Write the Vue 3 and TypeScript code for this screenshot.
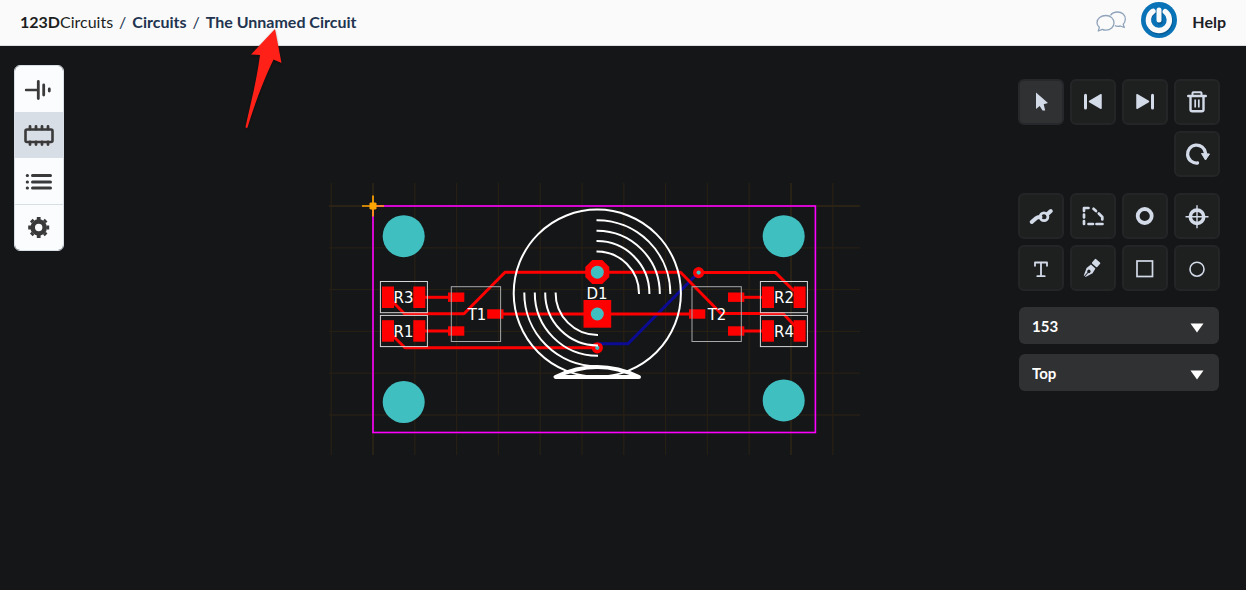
<script setup lang="ts">
import { ref } from 'vue'

interface Box { x: number; y: number; w: number; h: number }
interface Label { text: string; x: number; y: number }

const activeView = ref('pcb')
const activeTool = ref('select')
const traceWidth = ref('153')
const layer = ref('Top')

const views = [
  { id: 'schematic', label: 'Schematic view' },
  { id: 'pcb', label: 'PCB view' },
  { id: 'parts', label: 'Parts list' },
  { id: 'settings', label: 'Settings' },
]

const editTools = [
  { id: 'select', label: 'Select' },
  { id: 'first', label: 'Undo' },
  { id: 'last', label: 'Redo' },
  { id: 'delete', label: 'Delete' },
  { id: 'rotate', label: 'Rotate' },
]

const drawTools = [
  { id: 'trace', label: 'Trace' },
  { id: 'polygon', label: 'Polygon' },
  { id: 'via', label: 'Via' },
  { id: 'hole', label: 'Hole' },
  { id: 'text', label: 'Text' },
  { id: 'pen', label: 'Pen' },
  { id: 'rect', label: 'Rectangle' },
  { id: 'circle', label: 'Circle' },
]

const pitch = 41.8
const gridX = Array.from({ length: 13 }, (_, i) => 373 + (i - 1) * pitch)
const gridY = Array.from({ length: 6 }, (_, i) => 206 + i * pitch)

const holes = [[403.7, 236.2], [403.7, 402], [783.7, 236.2], [783.7, 400.4]]

const traces = [
  'M425 297.3H450', 'M425 331H450', 'M742 297.3H764', 'M742 331H764',
  'M393 302L404.5 313.8H464L505 272.2H680.5L721 313.5H783L795 326',
  'M393 336L405 347.8H597',
  'M503 314H690',
  'M698.5 272.6H775.5L794 291',
]

const pads: Box[] = [
  { x: 382, y: 286.5, w: 12, h: 21.5 }, { x: 413.3, y: 286.5, w: 12, h: 21.5 },
  { x: 382, y: 320.2, w: 12, h: 21.5 }, { x: 413.3, y: 320.2, w: 12, h: 21.5 },
  { x: 762, y: 286.5, w: 12, h: 21.5 }, { x: 793.6, y: 286.5, w: 12, h: 21.5 },
  { x: 762, y: 320.2, w: 12, h: 21.5 }, { x: 793.6, y: 320.2, w: 12, h: 21.5 },
  { x: 448, y: 292.5, w: 16.3, h: 9.4 }, { x: 448, y: 326.3, w: 16.3, h: 9.4 },
  { x: 487.2, y: 309.3, w: 16.3, h: 9.4 }, { x: 689, y: 309.3, w: 16.3, h: 9.4 },
  { x: 728, y: 292.5, w: 16.3, h: 9.4 }, { x: 728, y: 326.3, w: 16.3, h: 9.4 },
  { x: 583.5, y: 300, w: 27.7, h: 27.7 },
]

const outlines: Box[] = [
  { x: 380.4, y: 281.5, w: 47, h: 31.2 }, { x: 380.4, y: 315.4, w: 47, h: 31.2 },
  { x: 760.4, y: 281.5, w: 47, h: 31.2 }, { x: 760.4, y: 315.4, w: 47, h: 31.2 },
]
const packages: Box[] = [
  { x: 451.3, y: 286.7, w: 49.3, h: 54.8 }, { x: 692, y: 286.7, w: 49.3, h: 54.8 },
]

const labels: Label[] = [
  { text: 'R3', x: 403.5, y: 303 }, { text: 'R1', x: 403.5, y: 337 },
  { text: 'R2', x: 784, y: 303 }, { text: 'R4', x: 784, y: 337 },
  { text: 'T1', x: 477, y: 320 }, { text: 'T2', x: 717, y: 320 },
  { text: 'D1', x: 597, y: 299 },
]

const radii = [42, 52.4, 62.8, 73.3]
const upperArc = (r: number) => `M596.5 ${293.5 - r}A${r} ${r} 0 0 1 ${597 + r} 294`
const lowerArc = (r: number) => `M${597.6 - r} 292.5A${r} ${r} 0 0 0 598 ${293 + r}`
</script>

<template>
  <div class="app">
    <header class="topbar">
      <nav class="crumbs" aria-label="Breadcrumb">
        <a href="#" class="brand"><b>123D</b>Circuits</a>
        <span class="sep">/</span>
        <a href="#">Circuits</a>
        <span class="sep">/</span>
        <a href="#">The Unnamed Circuit</a>
      </nav>
      <div class="account">
        <button class="plain" aria-label="Messages">
          <svg width="30" height="24" viewBox="0 0 30 24" fill="none" stroke="#8fa3bb" stroke-width="1.3" stroke-linejoin="round">
            <path d="M14.500 5.300C16 3 18.700 2 21.500 2C26.200 2 29.300 5 29.300 9C29.300 11.200 28.700 13 27.200 14.300L28.300 17.500L24.300 16C22.700 16.400 20.500 16.300 18.800 15.700" />
            <path d="M10 5.500C14.500 5.500 18 8.700 18 12.800C18 17 14.500 20.200 10 20.200C8.700 20.200 7.400 20 6.300 19.400L2.300 21L3.300 17.300C1.800 16 1 14.500 1 12.800C1 8.700 5 5.500 10 5.500Z" />
          </svg>
        </button>
        <button class="plain profile" aria-label="Profile">
          <svg width="36" height="36" viewBox="0 0 36 36">
            <circle cx="18" cy="18" r="18" fill="#0a73b7" />
            <path d="M12.300 9.200A10.800 10.800 0 1 0 24.700 9.800M18.500 9V19" fill="none" stroke="#075a94" stroke-width="5" stroke-linecap="round" transform="translate(.5 1)" />
            <path d="M12 9.300A10.500 10.500 0 1 0 24.300 9.700" fill="none" stroke="#fafafa" stroke-width="5.400" stroke-linecap="round" />
            <path d="M18 8V18" stroke="#fafafa" stroke-width="5" stroke-linecap="round" />
          </svg>
        </button>
        <a href="#" class="help">Help</a>
      </div>
    </header>

    <main class="workspace">
      <svg class="board" role="img" aria-label="Circuit board layout">
        <g transform="translate(0 -46)">
          <g stroke="#261f14" stroke-width="1.300">
            <line v-for="x in gridX" :key="'x' + x" :x1="x" :x2="x" y1="183" y2="455" />
            <line v-for="y in gridY" :key="'y' + y" x1="329" x2="860" :y1="y" :y2="y" />
            <path d="M373 183V455M791 183V455M329 206H860" stroke="#2f2517" />
          </g>

          <path d="M597 343.800H628L698 273" class="bottom-copper" />
          <rect x="373" y="206" width="442.400" height="226.500" class="edge" />
          <circle v-for="(h, i) in holes" :key="i" :cx="h[0]" :cy="h[1]" r="21" class="drill" />

          <path v-for="t in traces" :key="t" :d="t" class="trace" />
          <rect v-for="(p, i) in pads" :key="'p' + i" :x="p.x" :y="p.y" :width="p.w" :height="p.h" class="copper" />
          <path d="M592.300 260H602.300L609.300 267V277L602.300 284H592.300L585.300 277V267Z" class="copper" />
          <circle cx="597.300" cy="347.800" r="5.600" class="copper" />
          <circle cx="698.600" cy="272.600" r="5.600" class="copper" />
          <circle cx="597.300" cy="272.200" r="6.500" class="drill" />
          <circle cx="597.300" cy="314" r="6.500" class="drill" />
          <circle cx="597.300" cy="347.800" r="2.100" class="drill" />
          <circle cx="698.600" cy="272.600" r="2.100" class="drill" />

          <g class="silk">
            <rect v-for="(o, i) in outlines" :key="'o' + i" :x="o.x" :y="o.y" :width="o.w" :height="o.h" stroke="#d6d6d6" stroke-width="1" class="thin" />
            <rect v-for="(o, i) in packages" :key="'k' + i" :x="o.x" :y="o.y" :width="o.w" :height="o.h" class="thin dim" />
            <circle cx="597.300" cy="293.200" r="83.600" />
            <path v-for="r in radii" :key="'u' + r" :d="upperArc(r)" />
            <path v-for="r in radii" :key="'l' + r" :d="lowerArc(r)" />
            <path d="M555.500 377H639Q597.300 357 555.500 377Z" class="base" />
          </g>
          <text v-for="l in labels" :key="l.text" :x="l.x" :y="l.y" class="ref">{{ l.text }}</text>

          <path d="M362 206H384M373 195.500V216.500" stroke="#ffa500" stroke-width="1.700" />
          <path d="M370.500 202.500H375.500L376.500 203.500V208.500L375.500 209.500H370.500L369.500 208.500V203.500Z" fill="#ffa500" />
        </g>
      </svg>

      <nav class="views" aria-label="Views">
        <button
          v-for="v in views" :key="v.id" :aria-label="v.label"
          :class="{ active: activeView === v.id }" @click="activeView = v.id"
        >
          <svg v-if="v.id === 'schematic'" width="30" height="24" viewBox="0 0 30 24" fill="none" stroke="#3a3a3a" stroke-linecap="round">
            <path d="M2 13H13" stroke-width="2.400" />
            <path d="M14.300 4.500V21.500" stroke-width="2.800" />
            <path d="M19.700 8V18M25.300 12V14" stroke-width="2.800" />
          </svg>
          <svg v-else-if="v.id === 'pcb'" width="30" height="24" viewBox="0 0 30 24" fill="none" stroke="#3a3a3a">
            <rect x="1.500" y="6.500" width="27" height="12.500" rx="1.500" stroke-width="2.600" />
            <path d="M6 3.500V6M12 3.500V6M18 3.500V6M24 3.500V6M6 19V21.500M12 19V21.500M18 19V21.500M24 19V21.500" stroke-width="2.800" stroke-linecap="round" />
          </svg>
          <svg v-else-if="v.id === 'parts'" width="30" height="24" viewBox="0 0 30 24" fill="none" stroke="#3a3a3a" stroke-width="3" stroke-linecap="round">
            <path d="M8.500 6.500H26.500M8.500 13H26.500M8.500 19H26.500M3.200 6.500H3.500M3.200 13H3.500M3.200 19H3.500" />
          </svg>
          <svg v-else width="30" height="24" viewBox="0 0 30 24" fill="none" stroke="#3a3a3a">
            <circle cx="14.700" cy="11.500" r="6" stroke-width="4.600" />
            <path d="M14.700 1V4M14.700 19V22M4.200 11.500H7M22.500 11.500H25.200M7.300 4.100L9 5.800M20.400 17.200L22.100 18.900M7.300 18.900L9 17.200M20.400 5.800L22.100 4.100" stroke-width="3.800" />
          </svg>
        </button>
      </nav>

      <aside class="panel">
        <div class="tools">
          <button
            v-for="t in editTools" :key="t.id" :aria-label="t.label"
            :class="['tool', t.id, { active: activeTool === t.id }]" @click="activeTool = t.id"
          >
            <svg width="44" height="44" viewBox="0 0 44 44" fill="none" stroke="#d3dae8">
              <path v-if="t.id === 'select'" d="M17 12.500V29L20.700 26L23.500 30.500H26.200L24.700 24.300L29 23Z" fill="#d3dae8" stroke="none" />
              <template v-else-if="t.id === 'first'">
                <path d="M14.500 15.300V28" stroke-width="3" stroke-linecap="round" />
                <path d="M30 14.700V28.300L18.500 21.500Z" fill="#d3dae8" stroke-width="1.500" stroke-linejoin="round" />
              </template>
              <template v-else-if="t.id === 'last'">
                <path d="M29.500 15.300V28" stroke-width="3" stroke-linecap="round" />
                <path d="M14 14.700V28.300L25.500 21.500Z" fill="#d3dae8" stroke-width="1.500" stroke-linejoin="round" />
              </template>
              <template v-else-if="t.id === 'delete'">
                <path d="M13.200 16H30.800" stroke-width="2.400" stroke-linecap="round" />
                <path d="M17.500 16V13Q17.500 12.200 18.300 12.200H25.700Q26.500 12.200 26.500 13V16" stroke-width="2" />
                <path d="M15.500 17V29.500Q15.500 31.300 17.300 31.300H26.700Q28.500 31.300 28.500 29.500V17" stroke-width="2.400" />
                <path d="M20.200 19.500V27.500M23.800 19.500V27.500" stroke-width="1.700" />
              </template>
              <template v-else>
                <path d="M22.500 31A9 9 0 1 1 30.500 21" stroke-width="3.300" stroke-linecap="round" />
                <path d="M26.500 21.500L34.500 22L30.500 28Z" fill="#d3dae8" stroke-width="1" stroke-linejoin="round" />
              </template>
            </svg>
          </button>
        </div>

        <div class="tools">
          <button
            v-for="t in drawTools" :key="t.id" :aria-label="t.label"
            :class="['tool', { active: activeTool === t.id }]" @click="activeTool = t.id"
          >
            <svg width="44" height="44" viewBox="0 0 44 44" fill="none" stroke="#d3dae8">
              <template v-if="t.id === 'trace'">
                <path d="M12.700 28L17 24.200Q18.500 22.900 20.500 22.900H21.500M28.500 20L31.800 17" stroke-width="4" stroke-linecap="round" />
                <circle cx="25" cy="22.700" r="3.900" stroke-width="2.800" />
              </template>
              <template v-else-if="t.id === 'polygon'">
                <path d="M13 17V14H17.500M13 20.500V23.500M13 27V30M17.500 30H22M25.500 30H31.500M22.500 14.800L25 17M27.800 19.500L31.300 23V25.500" stroke-width="2.700" stroke-linecap="round" stroke-linejoin="round" />
              </template>
              <circle v-else-if="t.id === 'via'" cx="21.700" cy="22" r="7" stroke-width="3.800" />
              <template v-else-if="t.id === 'hole'">
                <circle cx="22" cy="22.800" r="6.700" stroke-width="3.600" />
                <path d="M22 11.300V34.300M10.500 22.800H33.500" stroke-width="1.400" />
              </template>
              <path v-else-if="t.id === 'text'" d="M16 19.800V16.500H28V19.800M22 16.500V30.200M18.300 30.200H25.700" stroke-width="1.800" stroke-linejoin="round" stroke-linecap="round" />
              <g v-else-if="t.id === 'pen'" transform="translate(13 31) rotate(41)" fill="#d3dae8" stroke="none">
                <path d="M-1.200 -1L-4 -8.500L-3 -14H3L4 -8.500L1.200 -1Z" />
                <rect x="-3.500" y="-21.500" width="7" height="6" rx="1" />
                <path d="M0 0V-7" stroke="#1e2020" stroke-width="1" />
                <circle cx="0" cy="-7.500" r="1.700" fill="#1e2020" />
              </g>
              <rect v-else-if="t.id === 'rect'" x="14" y="15" width="15.500" height="15.500" stroke-width="1.700" />
              <circle v-else cx="22" cy="23.200" r="7" stroke-width="1.600" />
            </svg>
          </button>
        </div>

        <div class="fields">
          <label class="field">
            <select v-model="traceWidth" aria-label="Trace width">
              <option>153</option>
              <option>254</option>
            </select>
            <svg width="14" height="10" viewBox="0 0 14 10"><path d="M.5.500H13.500L7 9.500Z" fill="#fff" /></svg>
          </label>
          <label class="field">
            <select v-model="layer" aria-label="Layer">
              <option>Top</option>
              <option>Bottom</option>
            </select>
            <svg width="14" height="10" viewBox="0 0 14 10"><path d="M.5.500H13.500L7 9.500Z" fill="#fff" /></svg>
          </label>
        </div>
      </aside>
    </main>

    <svg class="pointer" width="44" height="108" viewBox="0 0 44 108" aria-hidden="true">
      <path d="M35 5L41.500 39L33.500 35.500C24 55 15 79 7.500 103.500Q6.500 105 5.500 103C11 78 17 55 20 31L11 30.500Z" fill="#ff2017" />
    </svg>
  </div>
</template>

<style>
body {
  margin: 0;
  background: #151618;
}
</style>

<style scoped>
.app {
  position: relative;
  display: flex;
  flex-direction: column;
  min-height: 100vh;
  background: #151618;
  font-family: Lato, "Liberation Sans", sans-serif;
  font-size: 16px;
}

button {
  padding: 0;
  cursor: pointer;
}

svg {
  display: block;
}

.topbar {
  display: flex;
  justify-content: space-between;
  align-items: center;
  box-sizing: border-box;
  height: 46px;
  padding: 0 20px 2px;
  background: #fafafa;
  border-bottom: 1px solid #dcdee0;
}

.topbar a {
  color: #22344f;
  font-weight: 700;
  text-decoration: none;
}

.crumbs {
  display: flex;
  gap: 6px;
  color: #22344f;
}

.topbar .brand {
  color: #1c1e22;
  font-weight: 400;
}

.account {
  display: flex;
  align-items: center;
  gap: 15px;
}

.account .help {
  color: #1c2026;
}

.plain {
  border: 0;
  background: none;
}

.profile {
  margin-bottom: 4px;
}

.workspace {
  position: relative;
  flex: 1;
  display: flex;
  justify-content: space-between;
  align-items: flex-start;
}

.board {
  position: absolute;
  inset: 0;
  width: 100%;
  height: 100%;
}

.trace {
  fill: none;
  stroke: #f00;
  stroke-width: 3;
  stroke-linejoin: round;
}

.copper {
  fill: #f00;
}

.bottom-copper {
  fill: none;
  stroke: #0b0b94;
  stroke-width: 3;
}

.edge {
  fill: none;
  stroke: #f0f;
  stroke-width: 1.6;
}

.drill {
  fill: #40bfc1;
}

.silk {
  fill: none;
  stroke: #fff;
  stroke-width: 2;
}

.silk .thin {
  stroke: #d6d6d6;
  stroke-width: 1;
}

.silk .dim {
  stroke: #a8a8a8;
}

.silk .base {
  stroke-width: 4;
  stroke-linejoin: round;
}

.ref {
  fill: #fff;
  font: 15px "DejaVu Sans", Arial, sans-serif;
  text-anchor: middle;
}

.views {
  position: relative;
  display: flex;
  flex-direction: column;
  margin: 19px 0 0 14px;
  border: 1px solid #d8dee6;
  border-radius: 6px;
  overflow: hidden;
}

.views button {
  display: flex;
  align-items: center;
  justify-content: center;
  width: 48px;
  height: 46px;
  border: 0;
  background: #fafcfe;
}

.views button.active {
  background: #d8dee6;
}

.views button:last-child {
  box-sizing: border-box;
  border-top: 1px solid #d8dee6;
}

.panel {
  position: relative;
  display: flex;
  flex-direction: column;
  gap: 16px;
  margin: 33px 26px 0 0;
}

.tools {
  display: grid;
  grid-template-columns: repeat(4, 46px);
  gap: 6px;
}

.tool {
  display: flex;
  align-items: center;
  justify-content: center;
  box-sizing: border-box;
  width: 46px;
  height: 46px;
  border: 2px solid #232526;
  border-radius: 6px;
  background: #1e2020;
}

.tool svg {
  flex: none;
}

.tool.active {
  background: #303133;
  border-color: #26282b;
}

.tool.rotate {
  grid-column: 4;
}

.fields {
  display: flex;
  flex-direction: column;
  gap: 10px;
  padding: 0 1px;
}

.field {
  position: relative;
}

.field select {
  display: block;
  width: 100%;
  height: 37px;
  padding: 0 13px;
  border: 0;
  border-radius: 6px;
  appearance: none;
  background: #303133;
  color: #fff;
  font: 700 15px Lato, "Liberation Sans", sans-serif;
}

.field svg {
  position: absolute;
  right: 15px;
  top: 16px;
  pointer-events: none;
}

.pointer {
  position: absolute;
  left: 240px;
  top: 24px;
  filter: drop-shadow(0 1px 1px rgba(0, 0, 0, 0.4));
  pointer-events: none;
}
</style>
